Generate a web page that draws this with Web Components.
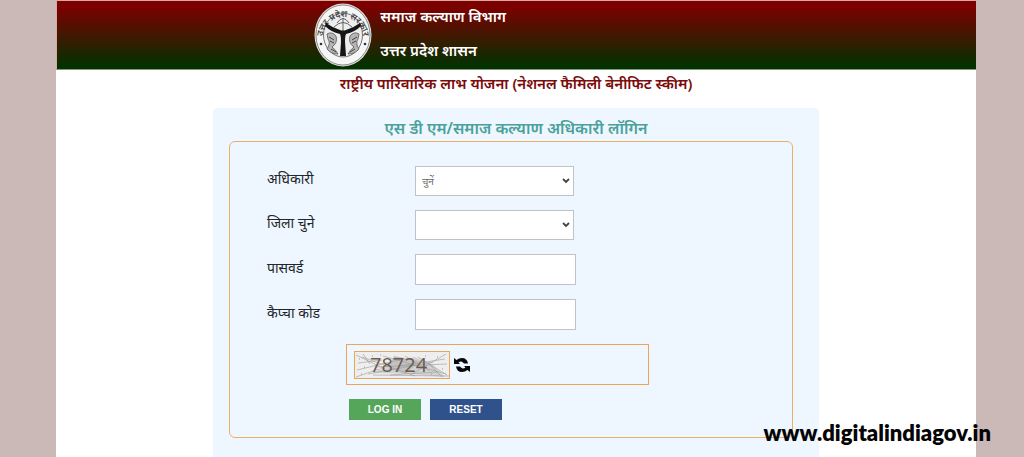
<!DOCTYPE html>
<html lang="hi">
<head>
<meta charset="utf-8">
<meta name="viewport" content="width=device-width, initial-scale=1">
<title>राष्ट्रीय पारिवारिक लाभ योजना</title>
<style>
  html { height: 100%; }
  body { margin: 0; min-height: 100%; display: flex; box-sizing: border-box; background: #cbb9b8; font-family: "Noto Sans", "Noto Sans Devanagari", "Lohit Devanagari", sans-serif; color: #212529; }
</style>
</head>
<body>
<portal-page>
  <site-header slot="header">
    <state-emblem slot="emblem"></state-emblem>
    <span slot="department">समाज कल्याण विभाग</span>
    <span slot="government">उत्तर प्रदेश शासन</span>
  </site-header>
  <span slot="title">राष्ट्रीय पारिवारिक लाभ योजना (नेशनल फैमिली बेनीफिट स्कीम)</span>
  <login-panel><span slot="heading">एस डी एम/समाज कल्याण अधिकारी लॉगिन</span></login-panel>
</portal-page>
<site-watermark>www.digitalindiagov.in</site-watermark>

<script>
function define(name, html) {
  const template = document.createElement('template');
  template.innerHTML = html;
  customElements.define(name, class extends HTMLElement {
    constructor() {
      super();
      this.attachShadow({ mode: 'open' }).append(template.content.cloneNode(true));
    }
  });
}

define('portal-page', `
<style>
  :host { display: flex; flex-direction: column; flex: 1; margin: 0 48px 0 56px; background: #fff; }
  main { display: flex; flex-direction: column; flex: 1; }
  h1 { margin: 0; font-size: 15px; line-height: 24px; padding: 1px 0 13px; font-weight: 600; color: #7b0a0a; text-align: center; }
</style>
<slot name="header"></slot>
<main><h1><slot name="title"></slot></h1><slot></slot></main>`);

define('site-header', `
<style>
  :host { display: block; border: 1px solid #d9a8a0; border-bottom-color: #7d9a7c; border-right: 0; background: linear-gradient(#7d0000 8%, #043000 94%); color: #fff; }
  header { display: flex; align-items: center; gap: 8px; height: 68px; padding-left: 28%; }
  div { padding-bottom: 4px; }
  p { margin: 0; font-size: 15px; line-height: 34px; font-weight: 600; }
</style>
<header>
  <slot name="emblem"></slot>
  <div><p><slot name="department"></slot></p><p><slot name="government"></slot></p></div>
</header>`);

define('state-emblem', `
<style>
  :host { display: block; width: 58px; height: 64px; flex: none; }
  svg { display: block; width: 100%; height: 100%; }
</style>
<svg viewBox="0 0 58 64" role="img" aria-label="उत्तर प्रदेश सरकार">
  <ellipse cx="29" cy="32" rx="28.5" ry="31.5" fill="#dedede"/>
  <ellipse cx="29" cy="32" rx="27" ry="30" fill="#f6f6f6" stroke="#777" stroke-width=".8"/>
  <ellipse cx="29" cy="32" rx="19.5" ry="22" fill="#eee" stroke="#555" stroke-width=".8"/>
  <path id="arc" d="M8.500 37 A20.500 23 0 1 1 49.500 37" fill="none"/>
  <text font-size="9" font-weight="600" fill="#444"><textPath href="#arc" startOffset="50%" text-anchor="middle">उत्तर प्रदेश सरकार</textPath></text>
  <path d="M29 15V30M23 20Q29 11 35 20M20 24Q29 15 38 24" fill="none" stroke="#555" stroke-width=".9"/>
  <path d="M12 20Q19 25 26 27Q29 28 32 27Q39 25 46 20L47 23Q41 29 32 31Q31 33 31 39L32 53H26L27 39Q27 33 26 31Q17 29 11 23Z" fill="#161616"/>
  <g fill="#b5b5b5" stroke="#555" stroke-width=".8">
    <path d="M13 31Q18 28 22 33Q24 40 18 44Q22 47 24 51Q17 51 13 46Q17 40 14 36Z"/>
    <path d="M45 31Q40 28 36 33Q34 40 40 44Q36 47 34 51Q41 51 45 46Q41 40 44 36Z"/>
  </g>
  <path d="M15 34L20 37M16 38L20 40M17 46L22 49M43 34L38 37M42 38L38 40M41 46L36 49" stroke="#333" stroke-width=".9"/>
  <circle cx="7" cy="41" r="1.300" fill="#333"/><circle cx="51" cy="41" r="1.300" fill="#333"/>
</svg>`);

define('form-field', `
<style>
  :host { display: grid; grid-template-columns: 148px 1fr; align-items: center; padding: 0 37px; }
</style>
<slot name="label"></slot><slot></slot>`);

define('captcha-image', `
<style>
  :host { display: block; width: 94px; height: 26px; border: 1px solid #eba555; background: #eee; }
  svg { display: block; width: 100%; height: 100%; }
</style>
<svg viewBox="0 0 94 26">
  <path d="M18 21L37 9L60 5L78 13L90 25L55 22Z" fill="#d2d2d2"/>
  <path d="M39 4L66 9L50 22L33 17Z" fill="#c2c2c2"/>
  <path d="M1 3L30 17M2 18L48 7M7 5L60 24M3 11L27 8M13 22L78 10M28 4L91 22M21 15L92 12M57 22L91 2M63 5L92 23M44 14L90 7M35 23L82 20M1 25L24 17M73 11L87 25M8 2L15 12M50 4L75 19M18 23L94 24" fill="none" stroke="#999" stroke-width=".6"/>
  <path d="M4 7h1M9 15h1M6 22h1M17 4h1M25 3h1M70 4h1M82 5h1M87 17h1M76 22h1" stroke="#999"/>
  <text x="15" y="20" font-family="Open Sans" font-size="20" font-weight="500" fill="#6b5a4e">78724</text>
</svg>`);

define('refresh-icon', `
<style>:host { display: block; width: 16px; height: 16px; } svg { display: block; }</style>
<svg width="16" height="16" viewBox="0 0 16 16">
  <path d="M0 1V7H6L4.500 5.500Q7 3.500 9 5.500L10 6.500H14Q13 1 8 1Q5 1 2.500 3ZM16 15V9H10L11.500 10.500Q9 12.500 7 10.500L6 9.500H2Q3 15 8 15Q11 15 13.500 13Z" fill="#080808"/>
</svg>`);

define('login-panel', `
<style>
  :host { display: block; box-sizing: border-box; flex: 1; width: 66%; max-width: 606px; align-self: center; padding: 8px 0 19px; border-radius: 4px 4px 0 0; background: #eef7ff; }
  h2 { margin: 0; text-align: center; font-size: 16px; line-height: 25px; font-weight: 600; color: #4ba19b; }
  form { display: flex; flex-direction: column; gap: 14px; margin: 0 26px 0 16px; padding: 24px 0 17px; border: 1px solid #eab068; border-radius: 6px; }
  label { font-size: 14px; line-height: 24px; padding-bottom: 4px; }
  select, input { box-sizing: border-box; width: 159px; height: 30px; border: 1px solid #bfc3c8; border-radius: 0; background: #fff; color: #666; font: 10px "Noto Sans", sans-serif; padding: 0 6px; }
  select { appearance: none; background: #fff url("data:image/svg+xml,%3Csvg xmlns='http://www.w3.org/2000/svg' width='8' height='6'%3E%3Cpath d='M1 1l3 3 3-3' fill='none' stroke='%23444' stroke-width='1.800'/%3E%3C/svg%3E") no-repeat right 3px center; }
  input { width: 161px; height: 31px; }
  .captcha { display: flex; align-items: center; gap: 4px; box-sizing: border-box; width: 303px; height: 41px; margin-left: 116px; padding: 0 7px; border: 1px solid #eba555; }
  .refresh { display: block; padding: 0; border: 0; background: none; }
  .actions { display: flex; gap: 9px; margin-left: 119px; }
  .actions button { width: 72px; height: 21px; padding: 0; border: 0; background: #55a65a; color: #fff; font: bold 10px/21px "Liberation Sans", sans-serif; }
  .actions .reset { background: #30528c; }
</style>
<h2><slot name="heading"></slot></h2>
<form>
  <form-field><label slot="label" for="officer">अधिकारी</label><select id="officer"><option>चुनें</option></select></form-field>
  <form-field><label slot="label" for="district">जिला चुने</label><select id="district"><option></option></select></form-field>
  <form-field><label slot="label" for="password">पासवर्ड</label><input id="password" type="password"></form-field>
  <form-field><label slot="label" for="code">कैप्चा कोड</label><input id="code" type="text"></form-field>
  <div class="captcha"><captcha-image></captcha-image><button class="refresh" type="button" aria-label="Refresh"><refresh-icon></refresh-icon></button></div>
  <div class="actions"><button type="button">LOG IN</button><button class="reset" type="reset">RESET</button></div>
</form>`);

define('site-watermark', `
<style>
  :host { display: block; position: absolute; right: 33px; bottom: 12px; color: #050505; font: 800 22px/24px Lato, sans-serif; }
</style>
<slot></slot>`);
</script>
</body>
</html>
